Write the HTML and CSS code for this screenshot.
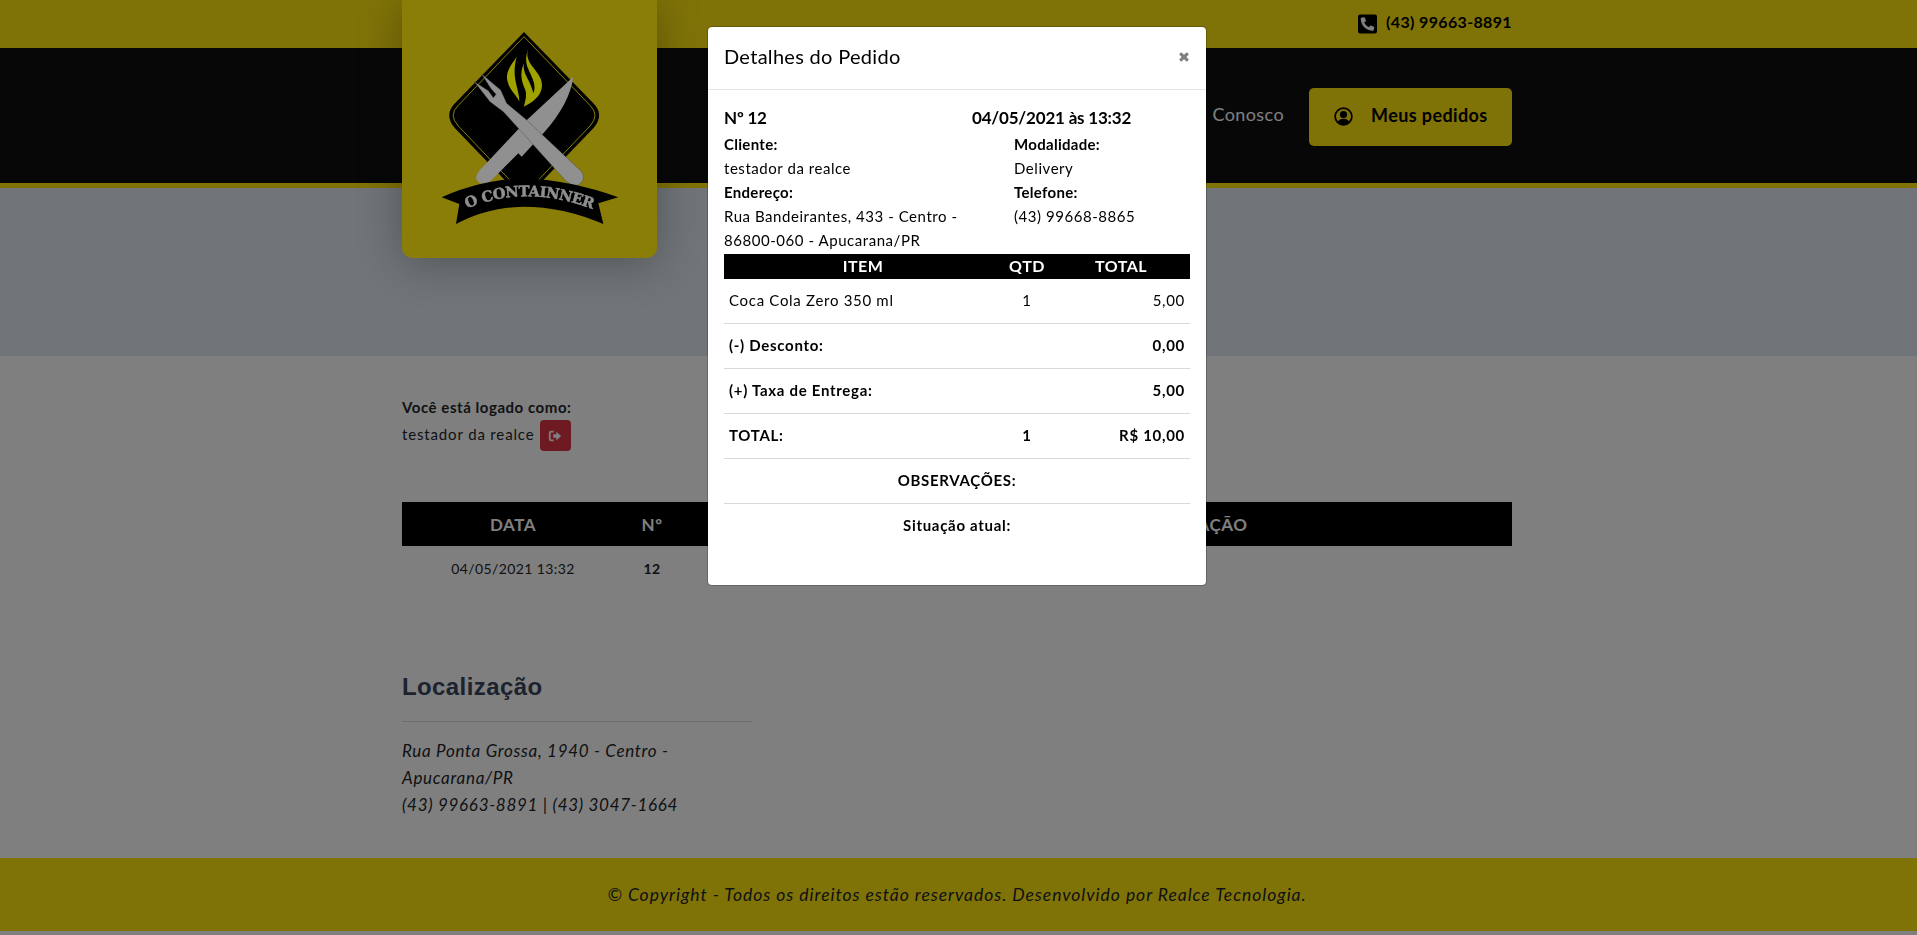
FILE: index.html
```html
<!DOCTYPE html>
<html lang="pt-BR">
<head>
  <meta charset="UTF-8" />
  <title>O Containner – Meus pedidos</title>
  <link rel="stylesheet" href="styles.css">
</head>
<body>
  <div class="topbar">
    <div class="container topbar-inner">
      <svg class="phone-icon" viewBox="0 0 448 512"><rect y="32" width="448" height="448" rx="48" fill="#000"/><path transform="matrix(-1 0 0 1 448 0)" fill="#fff" d="M94 416c-7 0-13-4.900-14.600-11.600l-15-65a15 15 0 0 1 8.700-17.200l70-30a15 15 0 0 1 17.500 4.300l31 37.900c48.900-23 88.300-62.900 110.900-110.900l-37.900-31a15 15 0 0 1-4.300-17.500l30-70a15 15 0 0 1 17.200-8.700l65 15A15 15 0 0 1 384 126c0 160.300-129.900 290-290 290z"/></svg>
      <span class="phone-text">(43) 99663-8891</span>
    </div>
  </div>

  <header class="header">
    <div class="container header-inner">
      <a class="logo-card" href="#">
        <svg class="logo" viewBox="66 0 765 774">
          <path d="M432 96 L640 310 Q675 345 640 385 L432 600 L225 385 Q190 345 225 310 Z" fill="#000"/>
          <path d="M432 110 L630 316 Q660 345 630 378 L432 585 L235 378 Q204 345 235 316 Z" fill="none" stroke="#8a7d08" stroke-width="3"/>
          <path d="M410 170 C392 198 372 218 385 252 C393 275 410 285 418 305 C420 270 392 235 410 170 Z" fill="#a0a200"/>
          <path d="M445 145 C428 195 488 212 486 258 C484 290 455 308 432 320 C436 300 442 285 435 268 C425 245 418 220 432 190 C426 222 452 240 460 280 C472 255 452 225 442 200 C436 182 438 165 445 145 Z" fill="#a0a200"/>
          <path d="M580 230 L443 358 L300 510 Q278 535 298 548 Q315 558 335 540 L415 460 L425 470 L490 400 Q570 310 580 230 Z" fill="#909090"/>
          <path d="M283 245 L325 272 L340 293 L348 283 L332 265 L305 222 L362 270 L380 310 L440 360 L605 515 Q620 540 595 555 Q575 560 555 540 L415 385 L370 335 L330 305 Z" fill="#909090" stroke="#333" stroke-width="1"/>
          <path d="M185 592 Q300 540 430 535 Q570 540 715 592 L655 610 L670 672 Q550 620 430 620 Q320 622 228 672 L238 612 Z" fill="#000"/>
          <path id="logo-arc" d="M262 626 Q430 552 636 626" fill="none"/>
          <text class="logo-text"><textPath href="#logo-arc" startOffset="50%" text-anchor="middle">O CONTAINNER</textPath></text>
        </svg>
      </a>
      <nav class="nav">
        <a class="nav-link" href="#">Conosco</a>
        <a class="orders-btn" href="#">
          <svg class="user-icon" viewBox="0 0 20 20"><circle cx="10" cy="10" r="8.800" fill="none" stroke="#000" stroke-width="1.800"/><circle cx="10" cy="8" r="3.800" fill="#000"/><path d="M3.800 15.800 C5 13 7.500 12.600 10 12.600 C12.500 12.600 15 13 16.200 15.800 C14.500 17.800 12.300 18.800 10 18.800 C7.700 18.800 5.500 17.800 3.800 15.800 Z" fill="#000"/></svg>
          <span class="orders-label">Meus pedidos</span>
        </a>
      </nav>
    </div>
  </header>

  <section class="hero"></section>

  <main class="container main">
    <p class="login-title">Você está logado como:</p>
    <p class="login-name"><span class="login-text">testador da realce</span>
      <a class="logout-btn" href="#">
        <svg viewBox="0 0 16 16" width="14" height="14"><path d="M6.500 3H3.500A1.500 1.500 0 0 0 2 4.500v7A1.500 1.500 0 0 0 3.500 13h3" fill="none" stroke="#fff" stroke-width="2"/><path d="M6 6h3.500V3L15 8l-5.500 5v-3H6z" fill="#fff"/></svg>
      </a>
    </p>

    <table class="orders">
      <thead>
        <tr><th class="col-data">DATA</th><th class="col-num">Nº</th><th class="col-fill"></th><th class="col-sit">SITUAÇÃO</th></tr>
      </thead>
      <tbody>
        <tr><td>04/05/2021 13:32</td><td class="strong">12</td><td></td><td></td></tr>
      </tbody>
    </table>

    <div class="location">
      <h3>Localização</h3>
      <address>Rua Ponta Grossa, 1940 - Centro - Apucarana/PR<br>(43) 99663-8891 | (43) 3047-1664</address>
    </div>
  </main>

  <footer class="footer">© Copyright - Todos os direitos estão reservados. Desenvolvido por Realce Tecnologia.</footer>

  <div class="backdrop"></div>

  <div class="modal-wrap">
    <div class="modal">
      <div class="modal-header">
        <h5>Detalhes do Pedido</h5>
        <svg class="close-icon" viewBox="0 0 10 10" width="10" height="10"><path d="M2.200 0.300 L5 2.700 L7.800 0.300 L9.900 2.300 L7.400 5 L9.900 7.700 L7.800 9.700 L5 7.300 L2.200 9.700 L0.100 7.700 L2.600 5 L0.100 2.300 Z" fill="#808080"/></svg>
      </div>
      <div class="modal-body">
        <div class="order-top">
          <span>Nº 12</span>
          <span>04/05/2021 às 13:32</span>
        </div>
        <div class="info-grid">
          <div>
            <p class="info-label">Cliente:</p>
            <p>testador da realce</p>
            <p class="info-label">Endereço:</p>
            <p>Rua Bandeirantes, 433 - Centro - 86800-060 - Apucarana/PR</p>
          </div>
          <div>
            <p class="info-label">Modalidade:</p>
            <p>Delivery</p>
            <p class="info-label">Telefone:</p>
            <p>(43) 99668-8865</p>
          </div>
        </div>
        <table class="items">
          <thead>
            <tr><th class="col-item">ITEM</th><th class="col-qtd">QTD</th><th class="col-total">TOTAL</th></tr>
          </thead>
          <tbody>
            <tr><td>Coca Cola Zero 350 ml</td><td class="center">1</td><td class="right">5,00</td></tr>
            <tr class="strong"><td>(-) Desconto:</td><td></td><td class="right">0,00</td></tr>
            <tr class="strong"><td>(+) Taxa de Entrega:</td><td></td><td class="right">5,00</td></tr>
            <tr class="strong"><td>TOTAL:</td><td class="center">1</td><td class="right">R$ 10,00</td></tr>
            <tr class="strong"><td colspan="3" class="center">OBSERVAÇÕES:</td></tr>
            <tr class="strong last"><td colspan="3" class="center">Situação atual:</td></tr>
          </tbody>
        </table>
      </div>
    </div>
  </div>
</body>
</html>
```

FILE: styles.css
```css
html, body {
  height: 935px;
  overflow: hidden;
}
body {
  margin: 0;
  font-family: Lato, "Noto Sans", sans-serif;
  font-size: 15px;
  letter-spacing: 0.7px;
  color: #212529;
  background-color: #fff;
}
p {
  margin: 0;
}
.container {
  width: 1110px;
  margin-left: 402px;
}
.topbar {
  height: 48px;
  background-color: #ffe610;
}
.topbar-inner {
  height: 100%;
  display: flex;
  justify-content: flex-end;
  align-items: center;
  gap: 9px;
}
.phone-icon {
  width: 19px;
  height: 22px;
}
.phone-text {
  padding-bottom: 6px;
  font-size: 16px;
  font-weight: 700;
  letter-spacing: 0.35px;
  color: #000;
}
.header {
  height: 135px;
  background-color: #0e0e0e;
  border-bottom: 5px solid #ffe610;
}
.header-inner {
  height: 100%;
  position: relative;
  display: flex;
  justify-content: flex-end;
  align-items: center;
}
/* the logo is lighter than the dimmed page, so it sits above the backdrop */
.logo-card {
  position: absolute;
  left: 0;
  top: -48px;
  width: 255px;
  height: 258px;
  background-color: #8a7d08;
  border-radius: 0 0 10px 10px;
  box-shadow: 0 5px 45px rgba(0, 0, 0, 0.3);
  z-index: 6;
}
.logo {
  display: block;
  width: 255px;
  height: 258px;
}
.logo-text {
  font-family: "DejaVu Serif", serif;
  font-weight: 700;
  font-size: 44px;
  letter-spacing: -1.500px;
  fill: #909090;
  stroke: #909090;
  stroke-width: 1.500px;
}
.nav {
  display: flex;
  align-items: center;
  gap: 25px;
  padding-top: 2px;
}
.nav-link {
  padding-bottom: 5px;
  font-size: 18px;
  letter-spacing: 0.4px;
  color: #fff;
  text-decoration: none;
}
.orders-btn {
  display: flex;
  align-items: center;
  gap: 18px;
  width: 203px;
  height: 58px;
  box-sizing: border-box;
  padding-left: 25px;
  background-color: #ffe610;
  border-radius: 5px;
  font-size: 18px;
  font-weight: 700;
  letter-spacing: 0.4px;
  color: #000;
  text-decoration: none;
}
.orders-label {
  padding-bottom: 3px;
}
.user-icon {
  width: 19px;
  height: 19px;
}
.hero {
  height: 168px;
  background-color: #e3ebf3;
}
.main {
  padding-top: 41px;
}
.login-title {
  font-weight: 700;
  line-height: 20px;
  letter-spacing: 0.55px;
}
.login-name {
  display: flex;
  align-items: center;
  gap: 5px;
  margin-top: 3px;
  height: 31px;
  letter-spacing: 0.85px;
}
.login-text {
  padding-bottom: 3px;
}
.logout-btn {
  display: flex;
  justify-content: center;
  align-items: center;
  width: 31px;
  height: 31px;
  background-color: #dc3545;
  border-radius: 4px;
}
.orders {
  width: 1110px;
  margin-top: 51px;
  border-collapse: collapse;
  table-layout: fixed;
}
.orders th {
  height: 44px;
  padding: 0;
  background-color: #000;
  color: #fff;
  font-size: 17px;
  letter-spacing: 0.5px;
}
.orders td {
  height: 44px;
  padding: 0;
  text-align: center;
  font-size: 14px;
  letter-spacing: 0.4px;
}
.col-data { width: 222px; }
.col-num { width: 56px; }
.col-sit { width: 618px; }
.strong {
  font-weight: 700;
}
.location {
  width: 350px;
  margin-top: 82px;
}
.location h3 {
  margin: 0;
  padding-bottom: 19px;
  border-bottom: 1px solid #d8d8d8;
  font-family: "Liberation Sans", Arial, sans-serif;
  font-size: 24px;
  line-height: 30px;
  font-weight: 700;
  letter-spacing: 0.4px;
  color: #3a445e;
}
.location address {
  margin-top: 15px;
  font-size: 17px;
  line-height: 27px;
  font-style: italic;
  letter-spacing: 0.7px;
}
.footer {
  position: absolute;
  left: 0;
  right: 0;
  top: 858px;
  height: 73px;
  line-height: 73px;
  padding-right: 3px;
  text-align: center;
  background-color: #ffe610;
  font-size: 17.500px;
  font-style: italic;
  letter-spacing: 0.96px;
}
.backdrop {
  position: fixed;
  inset: 0;
  background-color: rgba(0, 0, 0, 0.5);
  z-index: 5;
}
.modal-wrap {
  position: fixed;
  inset: 0;
  z-index: 7;
  display: flex;
  justify-content: center;
  align-items: flex-start;
  padding: 26px 3px 0 0;
}
.modal {
  width: 500px;
  height: 560px;
  box-sizing: border-box;
  background-color: #fff;
  border: 1px solid rgba(0, 0, 0, 0.2);
  border-radius: 5px;
  background-clip: padding-box;
  color: #000;
}
.modal-header {
  display: flex;
  justify-content: space-between;
  align-items: center;
  height: 62px;
  padding: 0 16px;
  border-bottom: 1px solid #e5e5e5;
}
.modal-header h5 {
  margin: 0;
  padding-bottom: 4px;
  font-size: 20px;
  font-weight: 400;
  letter-spacing: 0.3px;
  color: #000;
}
.close-icon {
  margin-right: 1px;
  margin-bottom: 2px;
}
.modal-body {
  padding: 16px 16px 0;
}
.order-top {
  display: grid;
  grid-template-columns: 248px auto;
  margin-bottom: 2px;
  font-size: 17px;
  font-weight: 700;
  letter-spacing: -0.200px;
  line-height: 24px;
}
.info-grid {
  display: grid;
  grid-template-columns: 290px auto;
}
.info-grid p {
  font-size: 15px;
  line-height: 24px;
  letter-spacing: 0.55px;
}
.info-grid .info-label {
  font-weight: 700;
  letter-spacing: 0.3px;
}
.items {
  width: 466px;
  margin-top: 2px;
  border-collapse: collapse;
  table-layout: fixed;
}
.items th {
  height: 23px;
  padding: 0 0 2px;
  background-color: #000;
  color: #fff;
  font-size: 16px;
  letter-spacing: 0.5px;
}
.items td {
  height: 42px;
  padding: 0 5px 2px;
  border-bottom: 1px solid #d8d8d8;
  font-size: 15px;
}
.items .last td {
  border-bottom: none;
}
.col-item { width: 278px; }
.col-qtd { width: 50px; }
.center { text-align: center; }
.right { text-align: right; }
```
